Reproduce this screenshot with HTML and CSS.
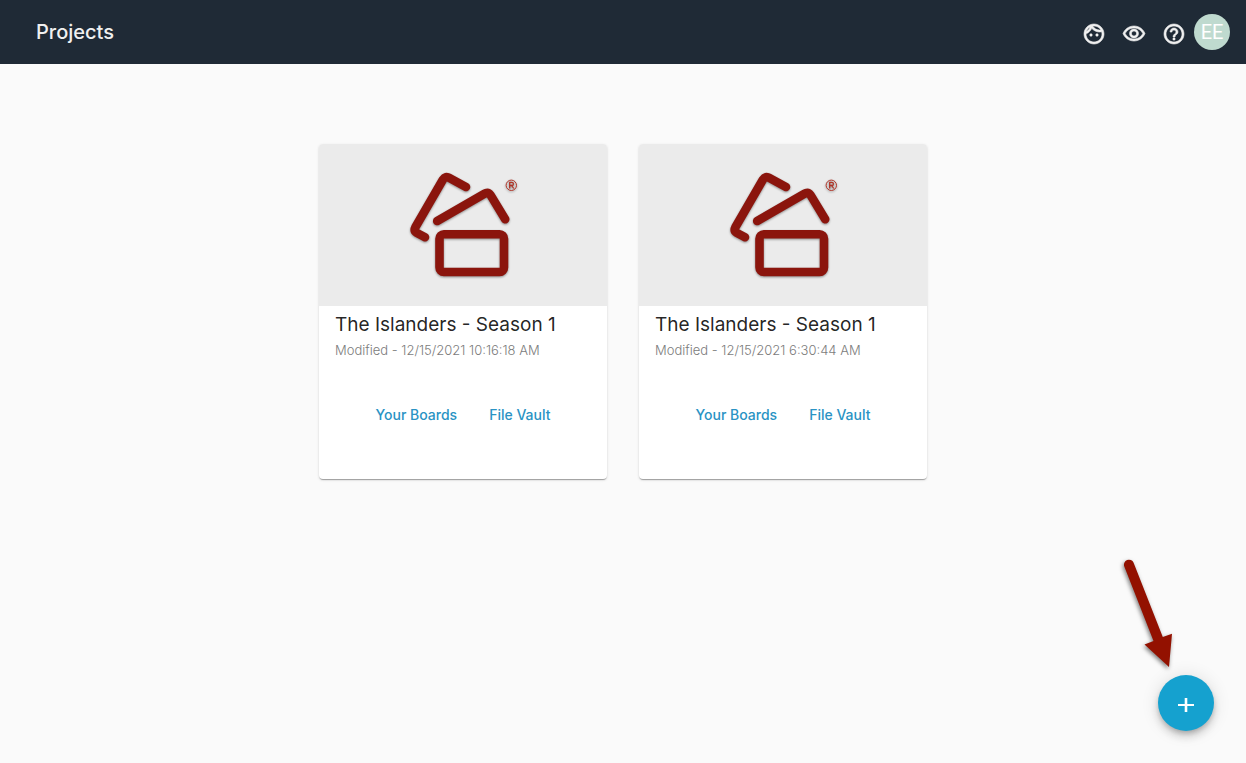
FILE: index.html
```html
<!DOCTYPE html>
<html lang="en">
<head>
  <meta charset="UTF-8">
  <meta name="viewport" content="width=device-width, initial-scale=1.0">
  <title>Projects</title>
  <link rel="stylesheet" href="styles.css">
</head>
<body>
  <!-- Shared project logo -->
  <svg class="defs" aria-hidden="true">
    <symbol id="logo" viewBox="0 0 130 130">
      <g fill="none" stroke="#8b150d" stroke-width="8.6" stroke-linecap="round" stroke-linejoin="round">
        <path d="M68 27L51.5 18Q47.5 15.5 45 19.500L17.500 67Q15.500 71 19 73L27 77.300"/>
        <path d="M39.200 61L86 34Q90 31.500 92.500 35L107.200 59.300"/>
        <rect x="41.500" y="74.300" width="64.500" height="37.700" rx="4.400"/>
      </g>
      <g fill="none" stroke="#b03427">
        <circle cx="113.300" cy="25.300" r="5.200" stroke-width="1"/>
        <path stroke-width="1.300" d="M111.700 28.500V22.300H113.800Q115.400 22.300 115.400 23.900T113.800 25.500H111.700M113.600 25.500L115.700 28.500"/>
      </g>
    </symbol>
  </svg>

  <header class="toolbar">
    <h1>Projects</h1>
    <div class="toolbar-actions">
      <button class="icon-btn" aria-label="Profile">
        <svg viewBox="0 0 24 24"><path d="M10.250 13c0 .69-.56 1.250-1.250 1.250S7.750 13.690 7.750 13s.56-1.250 1.250-1.250 1.250.56 1.250 1.250zM15 11.750c-.69 0-1.250.56-1.250 1.250s.56 1.250 1.250 1.250 1.250-.56 1.250-1.250-.56-1.250-1.250-1.250zm7 .25c0 5.520-4.480 10-10 10S2 17.520 2 12 6.480 2 12 2s10 4.480 10 10zM10.660 4.120C12.060 6.440 14.600 8 17.500 8c.46 0 .91-.05 1.340-.12C17.440 5.560 14.900 4 12 4c-.46 0-.91.05-1.340.12zM4.420 9.470c1.710-.97 3.030-2.550 3.660-4.440C6.370 6 5.050 7.580 4.420 9.470zM20 12c0-.78-.12-1.530-.33-2.240-.7.15-1.420.24-2.170.24-3.130 0-5.920-1.440-7.760-3.690C8.690 8.870 6.600 10.880 4 11.860c.01.04 0 .09 0 .14 0 4.410 3.590 8 8 8s8-3.590 8-8z"/></svg>
      </button>
      <button class="icon-btn" aria-label="Preview">
        <svg viewBox="0 0 24 24"><path d="M12 6c3.790 0 7.170 2.130 8.820 5.500C19.170 14.870 15.790 17 12 17s-7.170-2.130-8.820-5.500C4.830 8.130 8.210 6 12 6m0-2C7 4 2.730 7.110 1 11.500 2.730 15.890 7 19 12 19s9.270-3.110 11-7.500C21.270 7.110 17 4 12 4zm0 5c1.380 0 2.500 1.120 2.500 2.500S13.380 14 12 14s-2.500-1.120-2.500-2.500S10.620 9 12 9m0-2c-2.480 0-4.500 2.020-4.500 4.500S9.520 16 12 16s4.500-2.020 4.500-4.500S14.480 7 12 7z"/></svg>
      </button>
      <button class="icon-btn" aria-label="Help">
        <svg viewBox="0 0 24 24"><path d="M11 18h2v-2h-2v2zm1-16C6.480 2 2 6.480 2 12s4.480 10 10 10 10-4.480 10-10S17.520 2 12 2zm0 18c-4.410 0-8-3.590-8-8s3.590-8 8-8 8 3.590 8 8-3.590 8-8 8zm0-14c-2.210 0-4 1.790-4 4h2c0-1.100.9-2 2-2s2 .9 2 2c0 2-3 1.750-3 5h2c0-2.250 3-2.500 3-5 0-2.210-1.790-4-4-4z"/></svg>
      </button>
      <button class="avatar">EE</button>
    </div>
  </header>

  <main class="projects">
    <article class="card">
      <div class="card-media">
        <svg class="logo"><use href="#logo"/></svg>
      </div>
      <div class="card-body">
        <h2>The Islanders - Season 1</h2>
        <p>Modified - 12/15/2021 10:16:18 AM</p>
      </div>
      <div class="card-actions">
        <a href="#boards">Your Boards</a>
        <a href="#vault">File Vault</a>
      </div>
    </article>

    <article class="card">
      <div class="card-media">
        <svg class="logo"><use href="#logo"/></svg>
      </div>
      <div class="card-body">
        <h2>The Islanders - Season 1</h2>
        <p>Modified - 12/15/2021 6:30:44 AM</p>
      </div>
      <div class="card-actions">
        <a href="#boards">Your Boards</a>
        <a href="#vault">File Vault</a>
      </div>
    </article>
  </main>

  <!-- Pointer to the add button -->
  <svg class="arrow" viewBox="0 0 60 120" aria-hidden="true">
    <path fill="#931100" d="M4.300 16.500A5 5 0 0 1 13.600 12.800L42.800 87L52 83.800L49 117L24.500 94.500L33.500 91Z"/>
  </svg>
  <button class="fab" aria-label="Add project">
    <svg viewBox="0 0 24 24"><path d="M20 15h-6.700v6h-2.600v-6H4v-2h6.700V7h2.600v6H20z"/></svg>
  </button>
</body>
</html>
```
FILE: styles.css
```css
* {
  margin: 0;
  padding: 0;
  box-sizing: border-box;
}
body {
  font-family: Inter, 'Open Sans', sans-serif;
  background: #fafafa;
  color: rgba(0, 0, 0, 0.87);
  min-height: 100vh;
}
button {
  border: none;
  background: none;
  font-family: inherit;
  cursor: pointer;
}
.defs {
  display: none;
}
.toolbar {
  display: flex;
  justify-content: space-between;
  align-items: center;
  height: 64px;
  padding: 0 16px 0 36px;
  background: #1f2a36;
  color: #f0f0f0;
}
.toolbar h1 {
  font-size: 20px;
  font-weight: 500;
}
.toolbar-actions {
  display: flex;
  align-items: center;
}
.icon-btn {
  width: 40px;
  height: 40px;
  padding: 10px 8px 6px;
}
.icon-btn svg {
  display: block;
  width: 24px;
  height: 24px;
  fill: #f0f0f0;
  stroke: #f0f0f0;
  stroke-width: 0.6;
  overflow: visible;
}
.avatar {
  width: 36px;
  height: 36px;
  border-radius: 50%;
  background: #bfdacf;
  color: #fff;
  font-family: Roboto, sans-serif;
  font-size: 20px;
}
.projects {
  display: flex;
  flex-wrap: wrap;
  justify-content: center;
  gap: 32px;
  padding: 80px 32px;
}
.card {
  width: 288px;
  background: #fff;
  border-radius: 4px;
  overflow: hidden;
  box-shadow: 0 2px 1px -1px rgba(0, 0, 0, 0.2), 0 1px 1px rgba(0, 0, 0, 0.14), 0 1px 3px rgba(0, 0, 0, 0.12);
}
.card-media {
  display: flex;
  justify-content: center;
  align-items: center;
  aspect-ratio: 16 / 9;
  background: #ebebeb;
}
.logo {
  width: 130px;
  height: 130px;
  filter: drop-shadow(0 1px 1px rgba(0, 0, 0, 0.4));
}
.card-body {
  padding: 4px 16px;
}
.card-body h2 {
  font-size: 19px;
  font-weight: 400;
  line-height: 30px;
}
.card-body p {
  font-size: 13px;
  font-weight: 300;
  line-height: 20px;
  color: #7c7c7c;
}
.card-actions {
  display: flex;
  justify-content: center;
  gap: 32px;
  padding: 41px 16px 54px;
}
.card-actions a {
  color: #2a93c4;
  font-size: 14px;
  font-weight: 500;
  line-height: 20px;
  text-decoration: none;
}
.fab {
  position: fixed;
  right: 32px;
  bottom: 32px;
  width: 56px;
  height: 56px;
  padding: 16px;
  border-radius: 50%;
  background: #15a1cf;
  box-shadow: 0 3px 5px -1px rgba(0, 0, 0, 0.2), 0 6px 10px rgba(0, 0, 0, 0.14), 0 1px 18px rgba(0, 0, 0, 0.12);
}
.fab svg {
  display: block;
  width: 24px;
  height: 24px;
  fill: #fff;
}
.arrow {
  position: fixed;
  right: 66px;
  bottom: 93px;
  width: 60px;
  height: 120px;
  filter: drop-shadow(-1px 2px 2px rgba(0, 0, 0, 0.5));
}
```
